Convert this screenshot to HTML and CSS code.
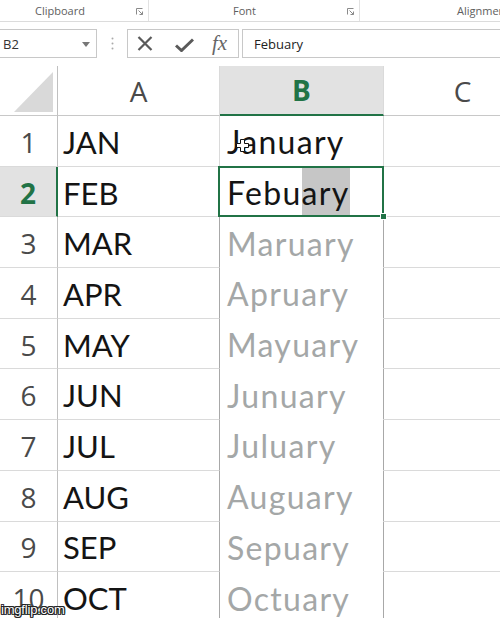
FILE: index.html
```html
<!DOCTYPE html>
<html>
<head>
<meta charset="utf-8">
<link rel="stylesheet" href="styles.css">
</head>
<body>
<div class="page">
  <div class="ribbon">
    <div class="grp g-clip"><span class="glabel">Clipboard</span><svg class="launch" width="7" height="7" viewBox="0 0 7 7"><path d="M0.5 6.5V0.5H6.5" fill="none" stroke="#8a8a8a" stroke-width="1"/><path d="M2.5 2.5L6.5 6.5M6.5 3.5V6.5H3.5" fill="none" stroke="#8a8a8a" stroke-width="1"/></svg></div>
    <div class="grp g-font"><span class="glabel">Font</span><svg class="launch" width="7" height="7" viewBox="0 0 7 7"><path d="M0.5 6.5V0.5H6.5" fill="none" stroke="#8a8a8a" stroke-width="1"/><path d="M2.5 2.5L6.5 6.5M6.5 3.5V6.5H3.5" fill="none" stroke="#8a8a8a" stroke-width="1"/></svg></div>
    <div class="grp g-align"><span class="glabel">Alignment</span></div>
  </div>

  <div class="fbar">
    <div class="namebox"><span class="nb-text">B2</span><svg width="8" height="5" viewBox="0 0 8 5"><path d="M0 0H8L4 5Z" fill="#777"/></svg></div>
    <div class="dots"><svg width="3" height="13" viewBox="0 0 3 13"><circle cx="1.5" cy="1.5" r="1" fill="#aaa"/><circle cx="1.5" cy="6.5" r="1" fill="#aaa"/><circle cx="1.5" cy="11.5" r="1" fill="#aaa"/></svg></div>
    <div class="fxbox">
      <svg class="ic-x" width="16" height="15" viewBox="0 0 16 15"><path d="M1.5 1L14.5 14M14.5 1L1.5 14" stroke="#5a5a5a" stroke-width="2.2" fill="none"/></svg>
      <svg class="ic-ok" width="19" height="14" viewBox="0 0 19 14"><path d="M1 7.5L6.5 12.5L18 1.5" stroke="#5a5a5a" stroke-width="3" fill="none"/></svg>
      <span class="fx">fx</span>
    </div>
    <div class="finput">Febuary</div>
  </div>

  <div class="sheet">
    <div class="row hrow">
      <div class="cell corner"><svg width="39" height="40" viewBox="0 0 39 40"><path d="M0 40H39V0Z" fill="#d9d9d9"/></svg></div>
      <div class="cell colhdr">A</div>
      <div class="cell colhdr cur">B</div>
      <div class="cell colhdr">C</div>
    </div>

    <div class="row">
      <div class="cell rh">1</div>
      <div class="cell ca">JAN</div>
      <div class="cell cb">January<svg class="cursor" width="13" height="13" viewBox="0 0 13 13"><path d="M4.5 0.5H8.5V4.5H12.5V8.5H8.5V12.5H4.5V8.5H0.5V4.5H4.5Z" fill="#fff" stroke="#111" stroke-width="1"/></svg></div>
      <div class="cell"></div>
    </div>

    <div class="row">
      <div class="cell rh rh-cur">2</div>
      <div class="cell ca">FEB</div>
      <div class="cell cb sel"><span class="t">Febu</span><span class="hl">ary</span><span class="handle"></span></div>
      <div class="cell"></div>
    </div>

    <div class="row pv">
      <div class="cell rh">3</div>
      <div class="cell ca">MAR</div>
      <div class="cell cb prev">Maruary</div>
      <div class="cell"></div>
    </div>

    <div class="row pv">
      <div class="cell rh">4</div>
      <div class="cell ca">APR</div>
      <div class="cell cb prev">Apruary</div>
      <div class="cell"></div>
    </div>

    <div class="row pv">
      <div class="cell rh">5</div>
      <div class="cell ca">MAY</div>
      <div class="cell cb prev">Mayuary</div>
      <div class="cell"></div>
    </div>

    <div class="row pv">
      <div class="cell rh">6</div>
      <div class="cell ca">JUN</div>
      <div class="cell cb prev">Junuary</div>
      <div class="cell"></div>
    </div>

    <div class="row pv">
      <div class="cell rh">7</div>
      <div class="cell ca">JUL</div>
      <div class="cell cb prev">Juluary</div>
      <div class="cell"></div>
    </div>

    <div class="row pv">
      <div class="cell rh">8</div>
      <div class="cell ca">AUG</div>
      <div class="cell cb prev">Auguary</div>
      <div class="cell"></div>
    </div>

    <div class="row pv">
      <div class="cell rh">9</div>
      <div class="cell ca">SEP</div>
      <div class="cell cb prev">Sepuary</div>
      <div class="cell"></div>
    </div>

    <div class="row pv">
      <div class="cell rh">10</div>
      <div class="cell ca">OCT</div>
      <div class="cell cb prev">Octuary</div>
      <div class="cell"></div>
    </div>
  </div>

  <div class="watermark">imgflip.com</div>
</div>
</body>
</html>
```

FILE: styles.css
```css
html, body {
  margin: 0;
  padding: 0;
  background: #fff;
}
.page {
  position: relative;
  width: 500px;
  height: 618px;
  overflow: hidden;
  font-family: "Open Sans", "Noto Sans", sans-serif;
}

/* ribbon */
.ribbon {
  display: flex;
  height: 21px;
  border-bottom: 1px solid #dcdcdc;
}
.grp {
  display: flex;
  align-items: center;
  box-sizing: border-box;
  height: 21px;
  font-size: 11px;
  color: #5e5e5e;
}
.g-clip {
  width: 149px;
  padding-left: 35px;
  padding-right: 5px;
  border-right: 1px solid #e2e2e2;
}
.g-font {
  width: 211px;
  padding-left: 84px;
  padding-right: 5px;
  border-right: 1px solid #e2e2e2;
}
.g-align {
  flex: 1;
  padding-left: 97px;
  white-space: nowrap;
  overflow: hidden;
}
.launch {
  margin-left: auto;
  margin-top: 2px;
}

/* formula bar */
.fbar {
  display: flex;
  margin-top: 7px;
  height: 29px;
}
.namebox {
  box-sizing: border-box;
  width: 98px;
  margin-left: -1px;
  border: 1px solid #c8c8c8;
  display: flex;
  align-items: center;
  padding-left: 3px;
  padding-right: 6px;
  font-size: 13px;
  color: #333;
}
.namebox svg {
  margin-left: auto;
  margin-top: 1px;
}
.dots {
  width: 30px;
  display: flex;
  align-items: center;
  justify-content: center;
}
.fxbox {
  box-sizing: border-box;
  width: 112px;
  border: 1px solid #c8c8c8;
  display: flex;
  align-items: center;
  padding-left: 9px;
}
.ic-ok {
  margin-left: 22px;
  margin-top: 2px;
}
.fx {
  margin-left: 18px;
  font-family: "Liberation Serif", "DejaVu Serif", serif;
  font-style: italic;
  font-size: 21px;
  color: #666;
  line-height: 1;
}
.finput {
  flex: 1;
  margin-left: 3px;
  box-sizing: border-box;
  border: 1px solid #c8c8c8;
  border-right: none;
  display: flex;
  align-items: center;
  padding-left: 11px;
  font-size: 13px;
  color: #222;
}

/* sheet */
.sheet {
  margin-top: 8px;
}
.row {
  display: grid;
  grid-template-columns: 58px 162px 164px 158px;
  height: 50.7px;
}
.hrow {
  height: 50px;
}
.cell {
  box-sizing: border-box;
  border-right: 1px solid #dadada;
  border-bottom: 1px solid #dadada;
  display: flex;
  align-items: center;
  position: relative;
  font-family: "Lato", "Carlito", sans-serif;
  font-size: 31px;
  color: #141414;
  white-space: nowrap;
}
.hrow .cell {
  border-bottom-color: #c8c8c8;
  justify-content: center;
  font-family: "Open Sans", "Noto Sans", sans-serif;
  font-size: 28px;
  color: #4a4a4a;
}
.hrow .corner {
  align-items: flex-end;
  justify-content: flex-end;
  padding: 0 4px 3px 0;
  border-right-color: #c0c0c0;
}
.hrow .cur {
  background: #e2e2e2;
  color: #217346;
  font-weight: 700;
  border-bottom: 2px solid #217346;
}
.rh {
  justify-content: center;
  font-family: "Open Sans", "Noto Sans", sans-serif;
  font-size: 28px;
  color: #4a4a4a;
  border-right-color: #c0c0c0;
  padding-top: 2px;
}
.rh-cur {
  background: #e2e2e2;
  color: #217346;
  font-weight: 700;
  border-right: 2px solid #217346;
}
.ca {
  padding-left: 5px;
  padding-top: 2px;
}
.cb {
  padding-left: 7px;
  padding-top: 2px;
  font-size: 32px;
  letter-spacing: 1.3px;
}
.pv .ca {
  border-right-color: #a8a8a8;
}
.prev {
  color: #a4a7a7;
  border-right-color: #a8a8a8;
  border-bottom-color: #fff;
}

/* selected cell */
.sel {
  align-items: stretch;
  padding-top: 0;
}
.sel .t,
.sel .hl {
  display: flex;
  align-items: center;
  padding-top: 2px;
}
.sel .hl {
  background: #c6c6c6;
}
.sel::after {
  content: "";
  position: absolute;
  left: -2px;
  top: -1px;
  right: -1px;
  bottom: -1px;
  border: 2px solid #217346;
  pointer-events: none;
}
.handle {
  position: absolute;
  right: -4px;
  bottom: -4px;
  width: 5px;
  height: 5px;
  background: #217346;
  border: 1px solid #fff;
  z-index: 2;
}
.cursor {
  position: absolute;
  left: 16px;
  top: 23px;
}

/* watermark */
.watermark {
  position: absolute;
  left: 1px;
  bottom: 1px;
  font-family: "Liberation Sans", Arial, sans-serif;
  font-size: 13px;
  color: #fff;
  letter-spacing: -0.2px;
  text-shadow: 1px 0 0 #222, -1px 0 0 #222, 0 1px 0 #222, 0 -1px 0 #222, 1px 1px 0 #222, -1px -1px 0 #222, 1px -1px 0 #222, -1px 1px 0 #222;
}
```
